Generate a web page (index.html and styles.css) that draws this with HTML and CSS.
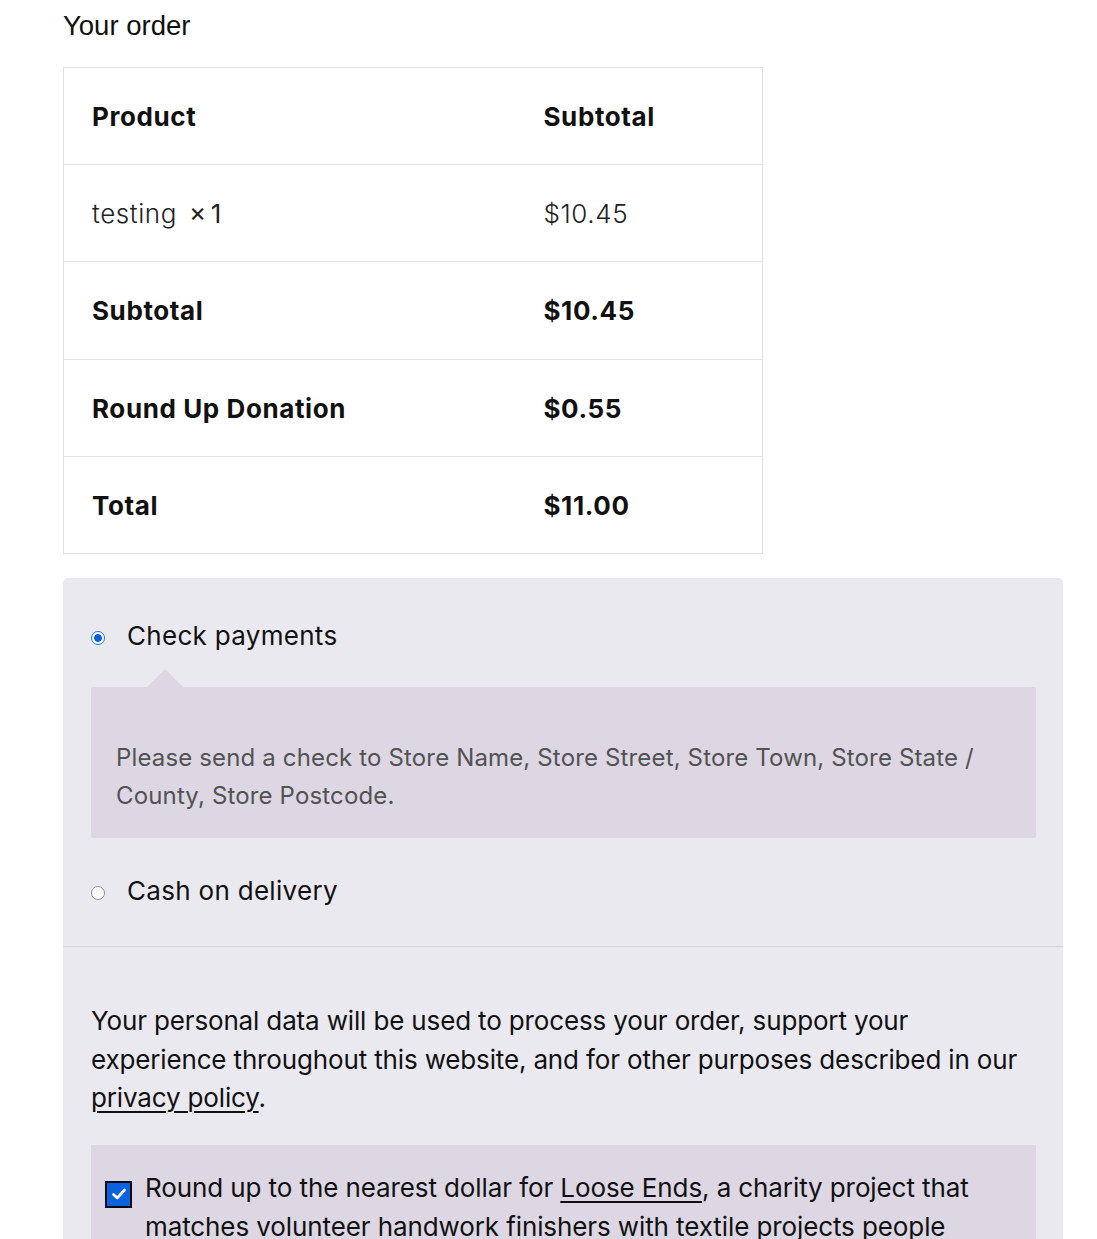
FILE: index.html
```html
<!DOCTYPE html>
<html>
<head>
<meta charset="utf-8">
<link rel="stylesheet" href="styles.css">
</head>
<body>
<div class="wrap">
  <h3 class="order-title">Your order</h3>
  <table class="order-table">
    <thead>
      <tr><th class="c1">Product</th><th>Subtotal</th></tr>
    </thead>
    <tbody>
      <tr><td class="c1">testing <span class="qty">×&thinsp;1</span></td><td>$10.45</td></tr>
    </tbody>
    <tfoot>
      <tr class="tall"><th class="c1">Subtotal</th><th>$10.45</th></tr>
      <tr><th class="c1">Round Up Donation</th><th>$0.55</th></tr>
      <tr><th class="c1">Total</th><th>$11.00</th></tr>
    </tfoot>
  </table>

  <div class="payment">
    <ul class="methods">
      <li class="method">
        <div class="method-row">
          <span class="radio checked"></span>
          <span class="method-label">Check payments</span>
        </div>
        <div class="pay-box">
          <p>Please send a check to Store Name, Store Street, Store Town, Store State / County, Store Postcode.</p>
        </div>
      </li>
      <li class="method method-last">
        <div class="method-row">
          <span class="radio"></span>
          <span class="method-label">Cash on delivery</span>
        </div>
      </li>
    </ul>
    <div class="place-order">
      <p class="privacy">Your personal data will be used to process your order, support your experience throughout this website, and for other purposes described in our <a href="#">privacy policy</a>.</p>
      <div class="roundup">
        <span class="checkbox"><svg width="16" height="14" viewBox="0 0 16 14"><path d="M2.5 7.5 L6.2 11 L13.5 3" fill="none" stroke="#fff" stroke-width="2.6" stroke-linecap="round" stroke-linejoin="round"/></svg></span>
        <span class="roundup-text">Round up to the nearest dollar for <a href="#">Loose Ends</a>, a charity project that matches volunteer handwork finishers with textile projects people have left unfinished.</span>
      </div>
    </div>
  </div>
</div>
</body>
</html>
```

FILE: styles.css
```css
* { box-sizing: border-box; }
html, body { margin: 0; padding: 0; background: #fff; }
body {
  font-family: Inter, "Noto Sans", sans-serif;
  color: #111;
}
.wrap {
  width: 1063px;
  padding-left: 63px;
}
.order-title {
  font-family: "Liberation Sans", Arial, sans-serif;
  font-weight: 400;
  font-size: 27.5px;
  line-height: 32px;
  margin: 10px 0 25px 0;
  color: #111;
}
.order-table {
  width: 700px;
  border-collapse: collapse;
  border: 1px solid #e2e2e2;
  font-size: 26px;
  letter-spacing: 0.6px;
}
.order-table th,
.order-table td {
  text-align: left;
  height: 97px;
  padding: 0 0 0 28px;
  border-top: 1px solid #e2e2e2;
  vertical-align: middle;
}
.order-table tr.tall th { height: 98px; }
.order-table th { font-weight: 700; }
.order-table td { font-weight: 300; color: #222; }
.order-table .c1 { width: 452px; }
.qty { font-weight: 400; margin-left: 4px; letter-spacing: 0; }

.payment {
  margin-top: 24px;
  width: 1000px;
  background: #ebe9f0;
  border-radius: 5px;
}
.methods {
  list-style: none;
  margin: 0;
  padding: 39px 27px 34px 28px;
  border-bottom: 1px solid #d6d3dc;
}
.method-row {
  display: flex;
  align-items: center;
  height: 40px;
}
.method-last { margin-top: 34px; }
.radio {
  width: 14px;
  height: 14px;
  border-radius: 50%;
  border: 1px solid #8f8f8f;
  background: #fff;
  margin: 2px 22px 0 0;
  flex: none;
}
.radio.checked {
  border: 1.5px solid #1a6fe0;
  background: radial-gradient(circle, #0b62e0 0 3.6px, #fff 4.1px);
}
.method-label {
  font-size: 26px;
  letter-spacing: 0.3px;
  color: #111;
  margin-top: -3px;
}
.pay-box {
  position: relative;
  margin-top: 30px;
  background: #dcd7e3;
  padding: 52px 24px 23px 25px;
  border-radius: 2px;
}
.pay-box::before {
  content: "";
  position: absolute;
  left: 56px;
  top: -18px;
  border: 18px solid transparent;
  border-top: 0;
  border-bottom: 18px solid #dcd7e3;
}
.pay-box p {
  margin: 0;
  font-size: 24px;
  line-height: 38px;
  color: #525252;
  letter-spacing: 0.15px;
}
.place-order {
  padding: 55px 27px 0 28px;
}
.privacy {
  margin: 0;
  font-size: 26px;
  line-height: 38.5px;
  letter-spacing: -0.15px;
  color: #111;
}
.privacy a, .roundup a {
  color: #111;
  text-decoration: underline;
  text-underline-offset: 4px;
  text-decoration-thickness: 1.5px;
}
.roundup {
  margin-top: 27px;
  background: #dcd7e3;
  padding: 23px 40px 24px 14px;
  display: flex;
  align-items: flex-start;
}
.checkbox {
  flex: none;
  width: 27px;
  height: 27px;
  margin: 13px 13px 0 0;
  border: 2.5px solid #0a0a0a;
  background: #0b62e0;
  display: flex;
  align-items: center;
  justify-content: center;
}
.roundup-text {
  font-size: 26px;
  line-height: 39px;
  letter-spacing: -0.1px;
  color: #111;
}
```
